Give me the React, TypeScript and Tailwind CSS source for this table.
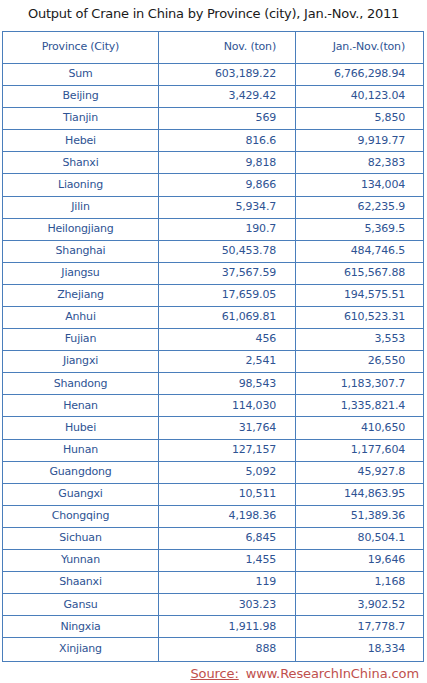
import React from "react";

const rows: [string, string, string][] = [
  ["Sum", "603,189.22", "6,766,298.94"],
  ["Beijing", "3,429.42", "40,123.04"],
  ["Tianjin", "569", "5,850"],
  ["Hebei", "816.6", "9,919.77"],
  ["Shanxi", "9,818", "82,383"],
  ["Liaoning", "9,866", "134,004"],
  ["Jilin", "5,934.7", "62,235.9"],
  ["Heilongjiang", "190.7", "5,369.5"],
  ["Shanghai", "50,453.78", "484,746.5"],
  ["Jiangsu", "37,567.59", "615,567.88"],
  ["Zhejiang", "17,659.05", "194,575.51"],
  ["Anhui", "61,069.81", "610,523.31"],
  ["Fujian", "456", "3,553"],
  ["Jiangxi", "2,541", "26,550"],
  ["Shandong", "98,543", "1,183,307.7"],
  ["Henan", "114,030", "1,335,821.4"],
  ["Hubei", "31,764", "410,650"],
  ["Hunan", "127,157", "1,177,604"],
  ["Guangdong", "5,092", "45,927.8"],
  ["Guangxi", "10,511", "144,863.95"],
  ["Chongqing", "4,198.36", "51,389.36"],
  ["Sichuan", "6,845", "80,504.1"],
  ["Yunnan", "1,455", "19,646"],
  ["Shaanxi", "119", "1,168"],
  ["Gansu", "303.23", "3,902.52"],
  ["Ningxia", "1,911.98", "17,778.7"],
  ["Xinjiang", "888", "18,334"],
];

export default function App() {
  return (
    <div
      className="w-[427px] h-[683px] bg-white flex flex-col"
      style={{ fontFamily: '"DejaVu Sans", "Liberation Sans", sans-serif' }}
    >
      <div className="h-[32px] flex items-start justify-center pt-[4px] text-[13px] text-[#1a1a1a] tracking-[-0.25px]">
        Output of Crane in China by Province (city), Jan.-Nov., 2011
      </div>
      <div className="ml-[2px] w-[422px] border border-[#4a7ebb] text-[#2e5393] text-[11px] tracking-[-0.2px]">
        <div className="flex h-[32px] border-b border-[#4a7ebb]">
          <div className="w-[156px] flex items-center justify-center border-r border-[#4a7ebb]">
            Province (City)
          </div>
          <div className="w-[137px] flex items-center justify-end pr-[19px] border-r border-[#4a7ebb]">
            Nov. (ton)
          </div>
          <div className="flex-1 flex items-center justify-end pr-[18px]">Jan.-Nov.(ton)</div>
        </div>
        {rows.map((r, i) => (
          <div
            key={r[0]}
            className={
              "flex h-[22.1px] " + (i < rows.length - 1 ? "border-b border-[#4a7ebb]" : "")
            }
          >
            <div className="w-[156px] flex items-center justify-center border-r border-[#4a7ebb]">
              {r[0]}
            </div>
            <div className="w-[137px] flex items-center justify-end pr-[19px] border-r border-[#4a7ebb]">
              {r[1]}
            </div>
            <div className="flex-1 flex items-center justify-end pr-[18px]">{r[2]}</div>
          </div>
        ))}
      </div>
      <div className="flex justify-end pr-[8px] pt-[2px] text-[13px] text-[#c0504d] tracking-[-0.1px]">
        <span className="underline">Source:</span>
        <span className="ml-[7px]">www.ResearchInChina.com</span>
      </div>
    </div>
  );
}
